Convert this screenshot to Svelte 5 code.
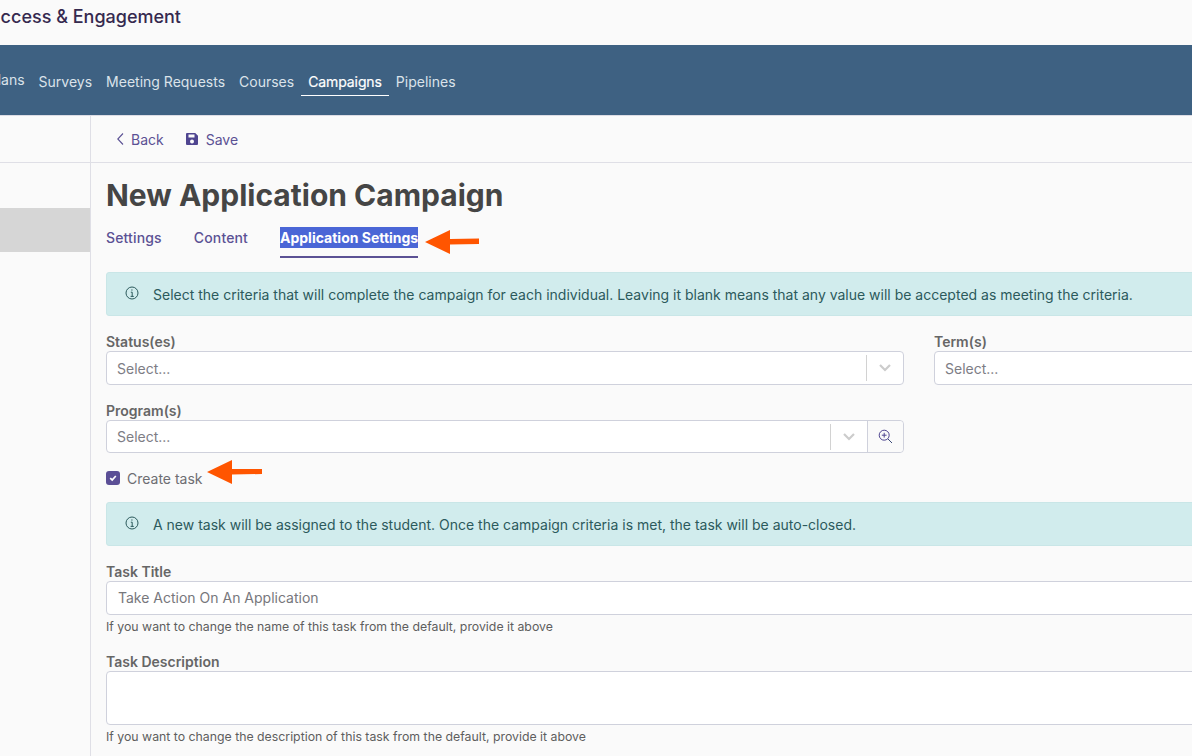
<script>
	const navItems = ['Surveys', 'Meeting Requests', 'Courses', 'Campaigns', 'Pipelines'];
	const tabs = ['Settings', 'Content'];
</script>

<div class="page">
	<header class="brand">
		<h1>Student Success &amp; Engagement</h1>
	</header>

	<nav class="nav">
		<div class="nav-cut"><a href="#plans">Plans</a></div>
		{#each navItems as item}
			<a href="#{item}" class:active={item === 'Campaigns'}>{item}</a>
		{/each}
	</nav>

	<div class="body">
		<aside class="side">
			<div class="side-top"></div>
			<div class="side-item"></div>
		</aside>

		<main class="main">
			<div class="toolbar">
				<button class="tool">
					<svg width="10" height="14" viewBox="0 0 10 14" fill="none" stroke="#5b5194" stroke-width="1.1"><path d="M8 1.5 L2.8 7 L8 12.5" /></svg>
					Back
				</button>
				<button class="tool save">
					<svg width="14" height="14" viewBox="0 0 14 14"><path fill="#4f4590" fill-rule="evenodd" d="M2 1h8.2L13 3.8V12a1 1 0 0 1-1 1H2a1 1 0 0 1-1-1V2a1 1 0 0 1 1-1zm1.5 1.6v3h6v-3zM7 7.6a2 2 0 1 0 0 4 2 2 0 0 0 0-4z" /></svg>
					Save
				</button>
			</div>

			<div class="content">
				<h2>New Application Campaign</h2>

				<div class="tabs">
					{#each tabs as tab}
						<span class="tab">{tab}</span>
					{/each}
					<span class="tab current"><span class="selected">Application Settings</span></span>
					<svg class="arrow arrow-tab" width="56" height="26" viewBox="0 0 56 26"><path fill="#ff5500" d="M1 13 L26 1 V10 L55 9.5 V15 L26 15.5 V25 Z" /></svg>
				</div>

				<div class="alert">
					<svg class="info" width="14" height="14" viewBox="0 0 14 14" fill="none" stroke="#2c5a5c"><circle cx="7" cy="7" r="6" /><path d="M5.8 6.2H7.2V10.4M5.6 10.4H8.8" /><path d="M6.9 3.4v1.2" stroke-width="1.3" /></svg>
					Select the criteria that will complete the campaign for each individual. Leaving it blank means that any value will be accepted as meeting the criteria.
				</div>

				<div class="row">
					<div class="col-left">
						<div class="label">Status(es)</div>
						<div class="select">
							<span class="placeholder">Select...</span>
							<span class="sep"></span>
							<span class="chev">
								<svg width="14" height="10" viewBox="0 0 14 10" fill="none" stroke="#cccccc" stroke-width="2.2"><path d="M2 2 L7 7 L12 2" /></svg>
							</span>
						</div>
					</div>
					<div class="col-right">
						<div class="label">Term(s)</div>
						<div class="select">
							<span class="placeholder">Select...</span>
						</div>
					</div>
				</div>

				<div class="col-left program">
					<div class="label">Program(s)</div>
					<div class="select short">
						<span class="placeholder">Select...</span>
						<span class="sep"></span>
						<span class="chev">
							<svg width="14" height="10" viewBox="0 0 14 10" fill="none" stroke="#cccccc" stroke-width="2.2"><path d="M2 2 L7 7 L12 2" /></svg>
						</span>
						<span class="lookup">
							<svg width="15" height="15" viewBox="0 0 15 15" fill="none" stroke="#4f4590"><circle cx="6.2" cy="6.2" r="5" /><path d="M6.2 3.8v4.8M3.8 6.2h4.8" /><path d="M9.9 9.9 L14 14" stroke="#3b4a78" /></svg>
						</span>
					</div>
				</div>

				<div class="check-row">
					<span class="checkbox">
						<svg width="10" height="10" viewBox="0 0 10 10" fill="none" stroke="#fff" stroke-width="1.7"><path d="M2.2 5.2 L4.2 7 L7.8 3" /></svg>
					</span>
					<span class="check-label">Create task</span>
					<svg class="arrow arrow-check" width="58" height="26" viewBox="0 0 58 26"><path fill="#ff5500" d="M1 13 L26 1 V10 L56 10 V15 L26 15.5 V25 Z" /></svg>
				</div>

				<div class="alert second">
					<svg class="info" width="14" height="14" viewBox="0 0 14 14" fill="none" stroke="#2c5a5c"><circle cx="7" cy="7" r="6" /><path d="M5.8 6.2H7.2V10.4M5.6 10.4H8.8" /><path d="M6.9 3.4v1.2" stroke-width="1.3" /></svg>
					A new task will be assigned to the student. Once the campaign criteria is met, the task will be auto-closed.
				</div>

				<div class="label task">Task Title</div>
				<div class="input">Take Action On An Application</div>
				<div class="help">If you want to change the name of this task from the default, provide it above</div>

				<div class="label desc">Task Description</div>
				<div class="textarea"></div>
				<div class="help">If you want to change the description of this task from the default, provide it above</div>
			</div>
		</main>
	</div>
</div>

<style>
	:global(html), :global(body) {
		margin: 0;
		overflow: hidden;
	}

	.page {
		width: 1192px;
		height: 756px;
		overflow: hidden;
		background: #fafafa;
		font-family: Inter, "Liberation Sans", sans-serif;
		font-size: 14px;
		color: #6b6b6b;
	}

	.brand {
		height: 45px;
		width: 181px;
		display: flex;
		justify-content: flex-end;
		overflow: hidden;
	}

	h1 {
		margin: 6px 0 0;
		font-size: 18px;
		line-height: 22px;
		font-weight: 500;
		color: #35294f;
		white-space: nowrap;
		flex: none;
	}

	.nav {
		background: #3e6182;
		display: flex;
		align-items: center;
		border-bottom: 1px solid #dcdce4;
		box-sizing: border-box;
		height: 71px;
	}

	.nav a {
		color: #dbe3ea;
		text-decoration: none;
		padding: 0 7px;
		line-height: 27px;
		height: 27px;
		margin-top: 3px;
		white-space: nowrap;
		border-bottom: 1px solid transparent;
		box-sizing: content-box;
	}

	.nav-cut {
		width: 31.6px;
		display: flex;
		justify-content: flex-end;
		overflow: hidden;
	}

	.nav-cut a {
		flex: none;
		margin-top: 0;
	}

	.nav a.active {
		color: #ffffff;
		letter-spacing: -0.1px;
		border-bottom-color: #ffffff;
		-webkit-text-stroke: 0.2px #ffffff;
	}

	.body {
		display: flex;
		height: 641px;
	}

	.side {
		width: 90px;
		flex: none;
		border-right: 1px solid #dfdfe6;
	}

	.side-top {
		height: 46px;
		border-bottom: 1px solid #dfdfe6;
	}

	.side-item {
		height: 44px;
		margin-top: 45px;
		background: #d6d6d6;
	}

	.main {
		flex: none;
		width: 1300px;
	}

	.toolbar {
		height: 46px;
		border-bottom: 1px solid #dfdfe6;
		display: flex;
		align-items: center;
		padding-left: 24px;
		gap: 21px;
	}

	.tool {
		display: flex;
		align-items: center;
		gap: 6px;
		border: 0;
		background: none;
		padding: 0;
		font: inherit;
		color: #5b5194;
	}

	.save {
		gap: 7px;
	}

	.content {
		padding: 14px 15px 0;
		width: 1270px;
		box-sizing: content-box;
	}

	h2 {
		margin: 0;
		font-size: 30px;
		line-height: 37px;
		font-weight: 700;
		color: #454545;
		white-space: nowrap;
	}

	.tabs {
		position: relative;
		display: flex;
		margin-top: 8px;
		height: 36px;
		gap: 32px;
	}

	.tab {
		color: #5b5194;
		font-weight: 500;
		line-height: 21px;
		letter-spacing: 0.15px;
		padding-top: 5px;
		height: 29px;
		white-space: nowrap;
	}

	.current {
		font-weight: 700;
		letter-spacing: 0;
		border-bottom: 2px solid #5b5194;
		box-sizing: content-box;
	}

	.selected {
		display: block;
		background: #4a66d6;
		color: #ffffff;
	}

	.arrow {
		position: absolute;
	}

	.arrow-tab {
		left: 318px;
		top: 7px;
	}

	.alert {
		margin-top: 14px;
		height: 44px;
		box-sizing: border-box;
		background: #d1eced;
		border: 1px solid #c9e6e7;
		border-radius: 3px;
		color: #2c5a5c;
		display: flex;
		align-items: center;
		padding-left: 18px;
		gap: 14px;
		white-space: nowrap;
		font-size: 14px;
	}

	.info {
		margin-top: -2px;
	}

	.row {
		display: flex;
		gap: 30px;
		margin-top: 16px;
	}

	.col-left {
		width: 798px;
		flex: none;
	}

	.col-right {
		flex: 1;
	}

	.label {
		font-weight: 600;
		line-height: 19px;
		height: 19px;
		color: #666666;
	}

	.select {
		height: 34px;
		box-sizing: border-box;
		background: #ffffff;
		border: 1px solid #cfd1dc;
		border-radius: 4px;
		display: flex;
		align-items: center;
	}

	.short {
		height: 33px;
	}

	.placeholder {
		flex: 1;
		padding-left: 10px;
		color: #7d7d85;
	}

	.sep {
		width: 1px;
		height: 26px;
		background: #d2d2d2;
	}

	.chev {
		width: 36px;
		display: flex;
		justify-content: center;
	}

	.lookup {
		width: 35px;
		height: 100%;
		background: #fafafa;
		border-left: 1px solid #cfd1dc;
		border-radius: 0 4px 4px 0;
		display: flex;
		align-items: center;
		justify-content: center;
	}

	.program {
		margin-top: 16px;
	}

	.check-row {
		position: relative;
		display: flex;
		align-items: center;
		gap: 7px;
		margin-top: 15px;
		height: 20px;
	}

	.checkbox {
		width: 14px;
		height: 14px;
		background: #5b4f96;
		border-radius: 3px;
		display: flex;
		align-items: center;
		justify-content: center;
	}

	.check-label {
		color: #6d6d72;
	}

	.arrow-check {
		left: 100px;
		top: -9px;
	}

	.second {
		margin-top: 14px;
	}

	.task {
		margin-top: 16px;
	}

	.input {
		height: 34px;
		box-sizing: border-box;
		background: #ffffff;
		border: 1px solid #cfd1dc;
		border-radius: 4px;
		padding-left: 11px;
		line-height: 32px;
		color: #77777c;
	}

	.help {
		font-size: 12.3px;
		line-height: 14px;
		margin-top: 5px;
		color: #5e5e5e;
	}

	.desc {
		margin-top: 18px;
	}

	.textarea {
		height: 54px;
		box-sizing: border-box;
		background: #ffffff;
		border: 1px solid #cfd1dc;
		border-radius: 4px;
	}
</style>
